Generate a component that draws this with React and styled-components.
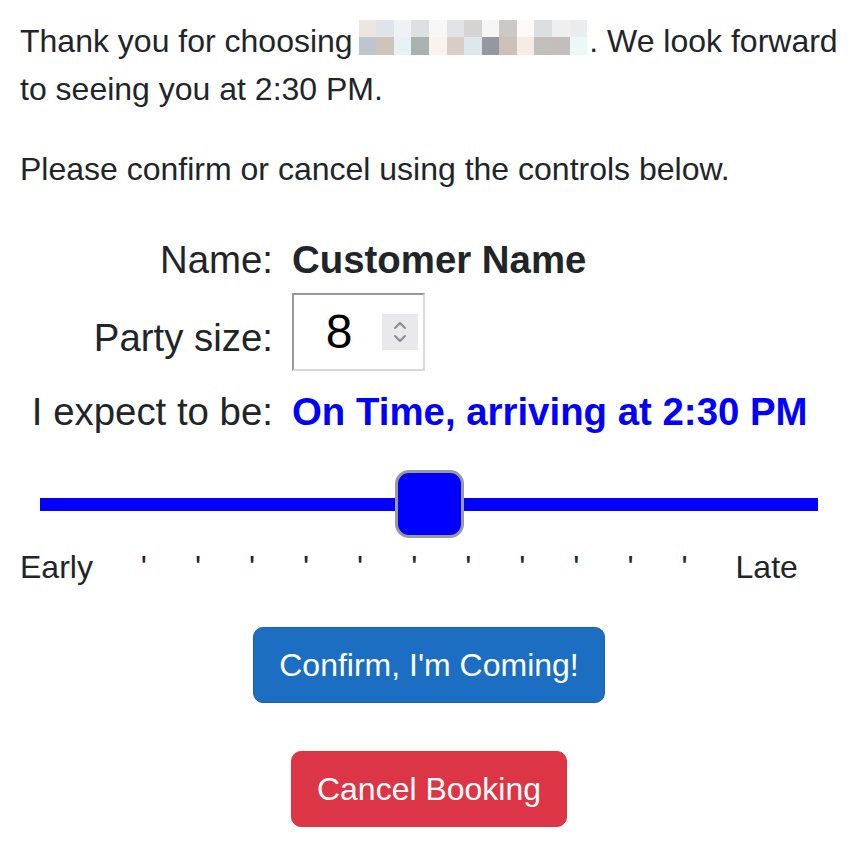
import React from 'react';
import styled, { createGlobalStyle } from 'styled-components';

// Estilos

const GlobalStyle = createGlobalStyle`
  body {
    margin: 0;
    background: #fff;
    font-family: "Liberation Sans", Arial, sans-serif;
    color: #212529;
  }
`

const Page = styled.div`
  padding: 17px 14px 20px 20px;
  font-size: 32px;
  line-height: 1.5;
`

const Text = styled.p`
  margin: 0 0 32px 0;
  white-space: ${p => (p.$nowrap ? 'nowrap' : 'normal')};
`

const MosaicBox = styled.span`
  display: inline-block;
  overflow: hidden;
  vertical-align: -3px;
  margin: 0 2px 0 -3px;
`

const Mosaic = styled.span`
  display: grid;
  grid-template-columns: repeat(13, 17.6px);
  grid-template-rows: repeat(2, 17.6px);
`

const Pixel = styled.span`
  background: ${p => p.$c};
`

const Form = styled.div`
  display: grid;
  grid-template-columns: 253px auto;
  column-gap: 19px;
  padding-top: 6px;
  font-size: 38.4px;
  line-height: 1.5;
`

const Label = styled.div`
  text-align: right;
  align-self: center;
  padding-top: ${p => p.$shift || 0}px;
`

const Value = styled.div`
  font-weight: bold;
  color: ${p => p.$color || '#212529'};
  align-self: center;
`

const NumberBox = styled.div`
  display: flex;
  align-items: center;
  width: 133px;
  height: 78px;
  box-sizing: border-box;
  border: 2px solid;
  border-color: #9a9a9a #d9d9d9 #d9d9d9 #9a9a9a;
  margin: 4px 0 12px 0;
  background: #fff;
`

const NumberInput = styled.input`
  width: 90px;
  border: none;
  outline: none;
  padding: 0;
  text-align: center;
  font-family: "Liberation Sans", Arial, sans-serif;
  font-size: 48px;
  color: #000;
  background: transparent;
`

const Spinner = styled.div`
  width: 36px;
  height: 36px;
  margin-left: -2px;
  background: #e9e9ed;
  display: flex;
  align-items: center;
  justify-content: center;
`

const SliderWrap = styled.div`
  margin: 30px 20px 5px 20px;
`

const Range = styled.input`
  -webkit-appearance: none;
  appearance: none;
  display: block;
  width: 100%;
  height: 68px;
  margin: 0;
  background: transparent;

  &::-webkit-slider-runnable-track {
    height: 13px;
    background: #0000ff;
  }

  &::-webkit-slider-thumb {
    -webkit-appearance: none;
    appearance: none;
    box-sizing: border-box;
    width: 69px;
    height: 68px;
    margin-top: -28px;
    background: #0000ff;
    border: 3px solid #9a9a9a;
    border-radius: 14px;
  }
`

const Ticks = styled.div`
  display: flex;
  justify-content: space-between;
  margin-right: 40px;
`

const Buttons = styled.div`
  display: flex;
  flex-direction: column;
  align-items: center;
  gap: 48px;
  margin-top: 36px;
`

const Button = styled.button`
  font-family: "Liberation Sans", Arial, sans-serif;
  font-size: 32px;
  line-height: 1.5;
  color: #fff;
  padding: 13px 25px;
  border: 1px solid ${p => p.$border};
  background: ${p => p.$bg};
  border-radius: 10px;
  cursor: pointer;
`

const topRow = ['#ede5e0', '#dfe3ea', '#eef2f4', '#dddfe2', '#f7f7f7', '#e1e3e7', '#d5d4d1', '#f6f6f6', '#cbc9c8', '#fcf9f6', '#dddee0', '#efefef', '#ebecee']
const bottomRow = ['#bdc5ce', '#d0c3bc', '#e7f2f7', '#a8b3af', '#f9f3ed', '#d9cec7', '#dde7ed', '#97989d', '#ccc1ba', '#f6ece4', '#c3bfbc', '#c3bebb', '#ebf8f8']

function App () {
  const [size, setSize] = React.useState('8')
  const [late, setLate] = React.useState(6)

  return (
    <Page>
      <GlobalStyle />
      <Text $nowrap>
        Thank you for choosing{' '}
        <MosaicBox>
          <Mosaic>
            {[...topRow, ...bottomRow].map((c, i) => <Pixel key={i} $c={c} />)}
          </Mosaic>
        </MosaicBox>. We look forward<br />to seeing you at 2:30 PM.
      </Text>
      <Text>Please confirm or cancel using the controls below.</Text>

      <Form>
        <Label>Name:</Label>
        <Value>Customer Name</Value>

        <Label $shift={4}>Party size:</Label>
        <NumberBox>
          <NumberInput value={size} onChange={e => setSize(e.target.value)} />
          <Spinner>
            <svg width="14" height="26" viewBox="0 0 14 26" fill="none" stroke="#8a8a90" strokeWidth="2" strokeLinecap="round" strokeLinejoin="round">
              <polyline points="2,9 7,4 12,9" />
              <polyline points="2,17 7,22 12,17" />
            </svg>
          </Spinner>
        </NumberBox>

        <Label>I expect to be:</Label>
        <Value $color="#0000ff">On Time, arriving at 2:30 PM</Value>
      </Form>

      <SliderWrap>
        <Range type="range" min="0" max="12" value={late} onChange={e => setLate(e.target.value)} />
      </SliderWrap>
      <Ticks>
        <span>Early</span>
        {Array.from({ length: 11 }).map((_, i) => <span key={i}>'</span>)}
        <span>Late</span>
      </Ticks>

      <Buttons>
        <Button $bg="#1b6ec2" $border="#1861ac">Confirm, I'm Coming!</Button>
        <Button $bg="#dc3545" $border="#dc3545">Cancel Booking</Button>
      </Buttons>
    </Page>
  )
}

export default App;
